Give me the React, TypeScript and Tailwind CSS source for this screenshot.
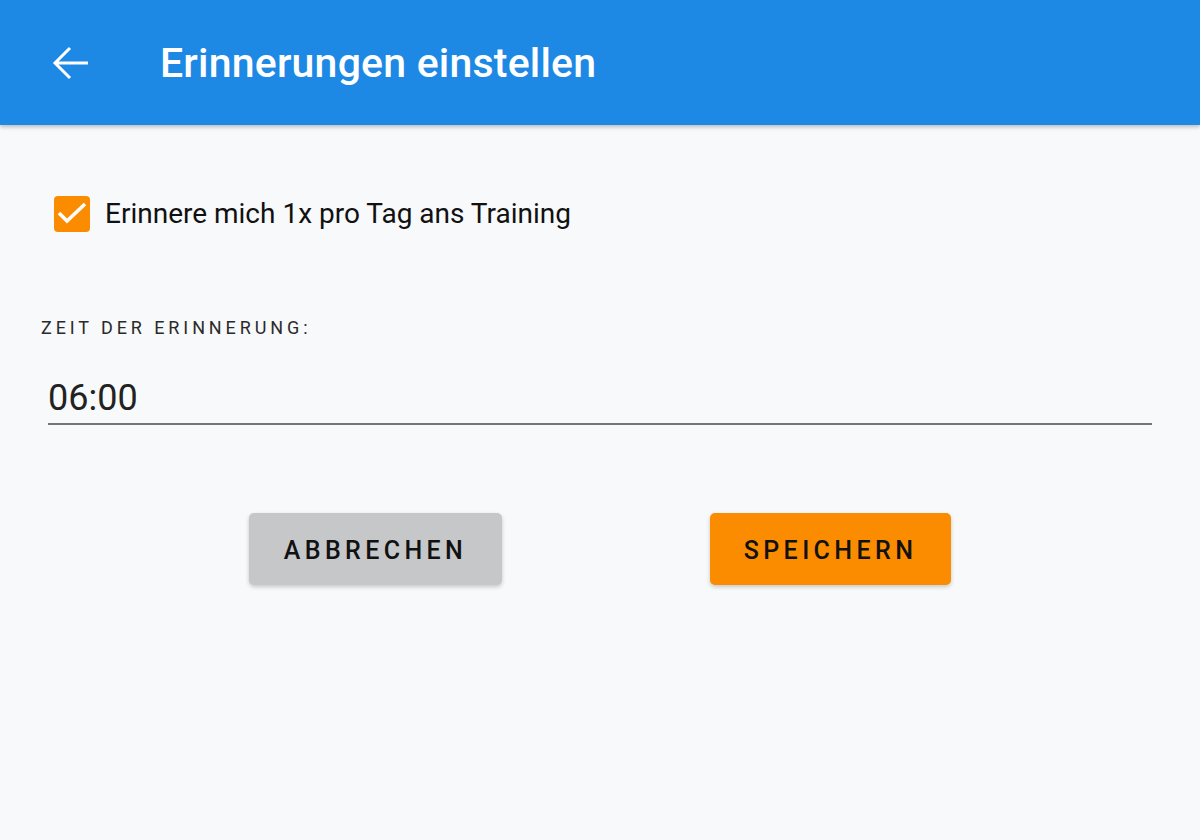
import React, { useState } from 'react';

export default function App() {
  const [checked, setChecked] = useState(true);
  const [time, setTime] = useState('06:00');

  return (
    <div
      className="min-h-screen w-full bg-[#f8f9fb] flex flex-col"
      style={{ fontFamily: 'Roboto, "Noto Sans", sans-serif' }}
    >
      {/* Top bar */}
      <header className="h-[125px] bg-[#1e88e5] flex items-center shadow-[0_2px_4px_rgba(0,0,0,0.25)] z-10">
        <button className="ml-[51px] w-[40px] h-[40px] flex items-center justify-center text-white">
          <svg width="40" height="40" viewBox="0 0 40 40" fill="none" stroke="currentColor" strokeWidth="3">
            <path d="M4 20h33M19 5L4 20l15 15" />
          </svg>
        </button>
        <h1 className="ml-[69px] mt-[3px] text-white text-[41px] font-medium tracking-[0.2px]">
          Erinnerungen einstellen
        </h1>
      </header>

      {/* Content */}
      <main className="flex flex-col px-[48px]">
        <label className="mt-[68px] ml-[6px] flex items-center gap-[15px] cursor-pointer">
          <span
            onClick={() => setChecked(!checked)}
            className={`w-[36px] h-[36px] rounded-[4px] flex items-center justify-center ${
              checked ? 'bg-[#fb8c00]' : 'border-2 border-[#757575]'
            }`}
          >
            {checked && (
              <svg width="36" height="36" viewBox="0 0 36 36" fill="none" stroke="white" strokeWidth="3.6">
                <path d="M5 17l8 8L31 8" />
              </svg>
            )}
          </span>
          <span className="text-[28px] text-[#111]">Erinnere mich 1x pro Tag ans Training</span>
        </label>

        <div className="mt-[79px] -ml-[7px] text-[18px] tracking-[3.9px] text-[#2a2a2a]">
          ZEIT DER ERINNERUNG:
        </div>

        <input
          value={time}
          onChange={(e) => setTime(e.target.value)}
          className="mt-[33px] w-full bg-transparent outline-none border-b-2 border-[#757575] text-[36px] text-[#222] pb-[1px] leading-[48px]"
        />

        <div className="mt-[88px] flex justify-center gap-[208px]">
          <button className="h-[72px] w-[253px] pt-[3px] rounded-[5px] bg-[#c6c7c9] text-[25px] font-medium tracking-[4.4px] text-[#111] shadow-[0_2px_4px_rgba(0,0,0,0.2)]">
            ABBRECHEN
          </button>
          <button className="h-[72px] w-[241px] pt-[3px] rounded-[5px] bg-[#fb8c00] text-[25px] font-medium tracking-[4.4px] text-[#111] shadow-[0_2px_4px_rgba(0,0,0,0.2)]">
            SPEICHERN
          </button>
        </div>
      </main>
    </div>
  );
}
